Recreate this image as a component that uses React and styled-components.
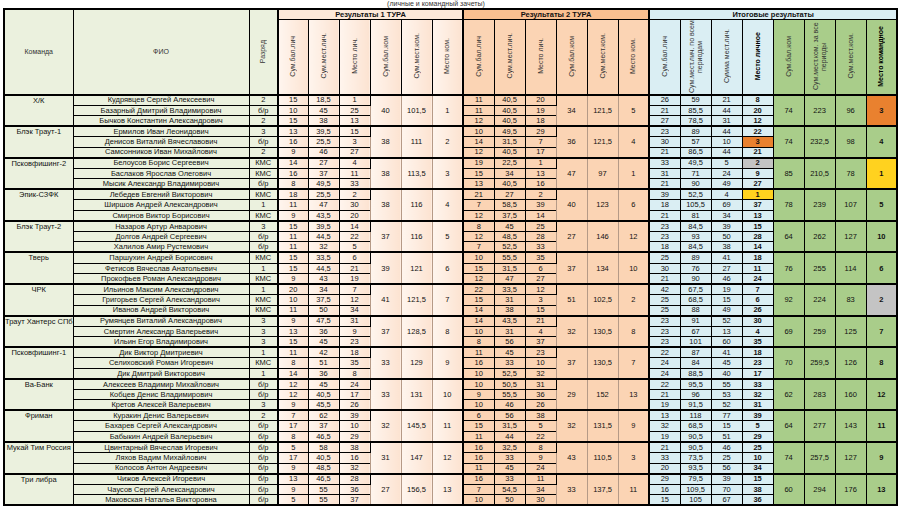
import styled, { createGlobalStyle, css } from "styled-components";

const GlobalStyle = createGlobalStyle`
  body {
    margin: 0;
    background: #fff;
    font-family: "Liberation Sans", Arial, sans-serif;
  }
`;

const tones = {
  base: "#ebf1de",
  r1: "linear-gradient(90deg, #fff5ee 0%, #fce3d1 100%)",
  r1head: "#fde9d9",
  r2: "#fbd4b4",
  r2head: "#fac090",
  blue: "#daeef3",
  lime: "#a9cd8a",
};

const marks = {
  orange: "#e9812f",
  yellow: "#ffd21f",
  gray: "#c4c4c4",
};

const Page = styled.div`
  width: 900px;
  height: 514px;
  overflow: hidden;
`;

const Caption = styled.div`
  height: 8px;
  overflow: hidden;
  display: flex;
  align-items: flex-end;
  justify-content: center;
  padding-right: 28px;
  font-size: 7px;
  line-height: 9px;
  color: #333;
`;

const Table = styled.table`
  width: 894px;
  margin-left: 3px;
  table-layout: fixed;
  border-collapse: collapse;
  border: 2px solid #000;
  color: #111;
  font-size: 7.5px;
`;

const HeadRow = styled.tr`
  height: ${(p) => p.$h}px;
`;

const Row = styled.tr`
  height: 10.54px;
`;

const Cell = styled.td`
  padding: 0;
  line-height: 1;
  text-align: center;
  vertical-align: ${(p) => (p.$top ? "top" : "middle")};
  white-space: nowrap;
  overflow: hidden;
  border: 1px solid ${(p) => (p.$soft ? "#b59a87" : "#000")};
  background: ${(p) => (p.$mark ? marks[p.$mark] : tones[p.$tone || "base"])};
  font-weight: ${(p) => (p.$bold ? 700 : 400)};
  ${(p) =>
    p.$thickLeft &&
    css`
      border-left: 2px solid #000;
    `}
  ${(p) =>
    p.$thickTop &&
    css`
      border-top: 2px solid #000;
    `}
  ${(p) =>
    p.$top &&
    css`
      padding-top: 1px;
    `}
`;

const HeadCell = styled(Cell)`
  color: #333;
  font-size: 7px;
`;

const GroupCell = styled(Cell)`
  font-weight: 700;
  font-size: 7.5px;
  color: #111;
`;

const VText = styled.div`
  display: inline-block;
  writing-mode: vertical-rl;
  transform: rotate(180deg);
  max-height: 73px;
  white-space: normal;
  text-align: center;
  line-height: 8px;
  font-weight: ${(p) => (p.$bold ? 700 : 400)};
  color: ${(p) => (p.$bold ? "#000" : "#333")};
`;

const widths = [69, 176, 29, 30, 31, 31, 31, 31, 31, ...Array(14).fill(31)];

const r1Heads = ["Сум.бал.лич", "Сум.мест.лич.", "Место лич.", "Сум.бал.ком", "Сум.мест.ком.", "Место ком."];
const finHeads = [
  ["Сум.бал.лич", "blue"],
  ["Сум.мест.лич. по всем периодам", "blue"],
  ["Сумма мест.лич.", "blue"],
  ["Место личное", "blue", true],
  ["Сум.бал.ком", "lime"],
  ["Сум.мест.ком. за все периоды", "lime"],
  ["Сум.мест.ком.", "lime"],
  ["Место командное", "lime", true],
];

// team|r1 ком x3|r2 ком x3|итог ком x4|отметка
// name|разряд|r1 x3|r2 x3|итог x4|отметка
const teams = [
  ["Х/К|40|101,5|1|34|121,5|5|74|223|96|3|orange",
    "Кудрявцев Сергей Алексеевич|2|15|18,5|1|11|40,5|20|26|59|21|8",
    "Базарный Дмитрий Владимирович|б/р|10|45|25|11|40,5|19|21|85,5|44|20",
    "Бычков Константин Александрович|2|15|38|13|12|40,5|18|27|78,5|31|12"],
  ["Блэк Траут-1|38|111|2|36|121,5|4|74|232,5|98|4",
    "Ермилов Иван Леонидович|3|13|39,5|15|10|49,5|29|23|89|44|22",
    "Денисов Виталий Вячеславович|б/р|16|25,5|3|14|31,5|7|30|57|10|3|orange",
    "Самсонников Иван Михайлович|2|9|46|27|12|40,5|17|21|86,5|44|21"],
  ["Псковфишинг-2|38|113,5|3|47|97|1|85|210,5|78|1|yellow",
    "Белоусов Борис Сергеевич|КМС|14|27|4|19|22,5|1|33|49,5|5|2|gray",
    "Баслаков Ярослав Олегович|КМС|16|37|11|15|34|13|31|71|24|9",
    "Мысик Александр Владимирович|б/р|8|49,5|33|13|40,5|16|21|90|49|27"],
  ["Эпик-СЗФК|38|116|4|40|123|6|78|239|107|5",
    "Лебедев Евгений Викторович|КМС|18|25,5|2|21|27|2|39|52,5|4|1|yellow",
    "Ширшов Андрей Александрович|1|11|47|30|7|58,5|39|18|105,5|69|37",
    "Смирнов Виктор Борисович|КМС|9|43,5|20|12|37,5|14|21|81|34|13"],
  ["Блэк Траут-2|37|116|5|27|146|12|64|262|127|10",
    "Назаров Артур Анварович|3|15|39,5|14|8|45|25|23|84,5|39|15",
    "Долгов Андрей Сергеевич|б/р|11|44,5|22|12|48,5|28|23|93|50|28",
    "Халилов Амир Рустемович|б/р|11|32|5|7|52,5|33|18|84,5|38|14"],
  ["Тверь|39|121|6|37|134|10|76|255|114|6",
    "Паршухин Андрей Борисович|КМС|15|33,5|6|10|55,5|35|25|89|41|18",
    "Фетисов Вячеслав Анатольевич|1|15|44,5|21|15|31,5|6|30|76|27|11",
    "Прокофьев Роман Александрович|КМС|9|43|19|12|47|27|21|90|46|24"],
  ["ЧРК|41|121,5|7|51|102,5|2|92|224|83|2|gray",
    "Ильинов Максим Александрович|1|20|34|7|22|33,5|12|42|67,5|19|7",
    "Григорьев Сергей Александрович|КМС|10|37,5|12|15|31|3|25|68,5|15|6",
    "Иванов Андрей Викторович|КМС|11|50|34|14|38|15|25|88|49|26"],
  ["Траут Хантерс СПб|37|128,5|8|32|130,5|8|69|259|125|7",
    "Румянцев Виталий Александрович|3|9|47,5|31|14|43,5|21|23|91|52|30",
    "Смертин Александр Валерьевич|3|13|36|9|10|31|4|23|67|13|4",
    "Ильин Егор Владимирович|3|15|45|23|8|56|37|23|101|60|35"],
  ["Псковфишинг-1|33|129|9|37|130,5|7|70|259,5|126|8",
    "Дик Виктор Дмитриевич|1|11|42|18|11|45|23|22|87|41|18",
    "Селиховский Роман Игоревич|КМС|8|51|35|16|33|10|24|84|45|23",
    "Дик Дмитрий Викторович|1|14|36|8|10|52,5|32|24|88,5|40|17"],
  ["Ва-Банк|33|131|10|29|152|13|62|283|160|12",
    "Алексеев Владимир Михайлович|б/р|12|45|24|10|50,5|31|22|95,5|55|33",
    "Кобцев Денис Владимирович|б/р|12|40,5|17|9|55,5|36|21|96|53|32",
    "Кретов Алексей Валерьевич|3|9|45,5|26|10|46|26|19|91,5|52|31"],
  ["Фриман|32|145,5|11|32|131,5|9|64|277|143|11",
    "Куракин Денис Валерьевич|2|7|62|39|6|56|38|13|118|77|39",
    "Бахарев Сергей Александрович|б/р|17|37|10|15|31,5|5|32|68,5|15|5",
    "Бабыкин Андрей Валерьевич|б/р|8|46,5|29|11|44|22|19|90,5|51|29"],
  ["Мукай Тим Россия|31|147|12|43|110,5|3|74|257,5|127|9",
    "Цвинтарный Вячеслав Игоревич|б/р|5|58|38|16|32,5|8|21|90,5|46|25",
    "Ляхов Вадим Михайлович|б/р|17|40,5|16|16|33|9|33|73,5|25|10",
    "Колосов Антон Андреевич|б/р|9|48,5|32|11|45|24|20|93,5|56|34"],
  ["Три либра|27|156,5|13|33|137,5|11|60|294|176|13",
    "Чижов Алексей Игоревич|б/р|13|46,5|28|16|33|11|29|79,5|39|15",
    "Чаусов Сергей Александрович|б/р|9|55|36|7|54,5|34|16|109,5|70|38",
    "Маковская Наталья Викторовна|б/р|5|55|37|10|50|30|15|105|67|36"],
];

function TeamRows({ data }) {
  const [head, ...members] = data;
  const t = head.split("|");
  return members.map((line, i) => {
    const m = line.split("|");
    const first = i === 0;
    return (
      <Row key={i}>
        {first && (
          <Cell rowSpan={3} $top $thickTop>
            {t[0]}
          </Cell>
        )}
        <Cell $thickTop={first}>{m[0]}</Cell>
        <Cell $thickTop={first}>{m[1]}</Cell>
        {m.slice(2, 5).map((v, k) => (
          <Cell key={"a" + k} $tone="r1" $thickTop={first} $thickLeft={k === 0}>
            {v}
          </Cell>
        ))}
        {first &&
          t.slice(1, 4).map((v, k) => (
            <Cell key={"b" + k} rowSpan={3} $tone="r1" $soft $thickTop>
              {v}
            </Cell>
          ))}
        {m.slice(5, 8).map((v, k) => (
          <Cell key={"c" + k} $tone="r2" $thickTop={first} $thickLeft={k === 0}>
            {v}
          </Cell>
        ))}
        {first &&
          t.slice(4, 7).map((v, k) => (
            <Cell key={"d" + k} rowSpan={3} $tone="r2" $soft $thickTop>
              {v}
            </Cell>
          ))}
        {m.slice(8, 12).map((v, k) => (
          <Cell
            key={"e" + k}
            $tone="blue"
            $thickTop={first}
            $thickLeft={k === 0}
            $bold={k === 3}
            $mark={k === 3 ? m[12] : undefined}
          >
            {v}
          </Cell>
        ))}
        {first &&
          t.slice(7, 11).map((v, k) => (
            <Cell
              key={"f" + k}
              rowSpan={3}
              $tone="lime"
              $thickTop
              $bold={k === 3}
              $mark={k === 3 ? t[11] : undefined}
            >
              {v}
            </Cell>
          ))}
      </Row>
    );
  });
}

export default function App() {
  return (
    <Page>
      <GlobalStyle />
      <Caption>(личные и командный зачеты)</Caption>
      <Table>
        <colgroup>
          {widths.map((w, i) => (
            <col key={i} style={{ width: w }} />
          ))}
        </colgroup>
        <thead>
          <HeadRow $h={10}>
            <HeadCell rowSpan={2}>Команда</HeadCell>
            <HeadCell rowSpan={2}>ФИО</HeadCell>
            <HeadCell rowSpan={2}>
              <VText>Разряд</VText>
            </HeadCell>
            <GroupCell colSpan={6} $tone="r1head" $thickLeft>
              Результаты 1 ТУРА
            </GroupCell>
            <GroupCell colSpan={6} $tone="r2head" $thickLeft>
              Результаты 2 ТУРА
            </GroupCell>
            <GroupCell colSpan={8} $tone="blue" $thickLeft>
              Итоговые результаты
            </GroupCell>
          </HeadRow>
          <HeadRow $h={75}>
            {r1Heads.map((h, k) => (
              <HeadCell key={"h1" + k} $tone="r1" $thickLeft={k === 0}>
                <VText>{h}</VText>
              </HeadCell>
            ))}
            {r1Heads.map((h, k) => (
              <HeadCell key={"h2" + k} $tone="r2" $thickLeft={k === 0}>
                <VText>{h}</VText>
              </HeadCell>
            ))}
            {finHeads.map(([h, tone, bold], k) => (
              <HeadCell key={"h3" + k} $tone={tone} $thickLeft={k === 0}>
                <VText $bold={bold}>{h}</VText>
              </HeadCell>
            ))}
          </HeadRow>
        </thead>
        <tbody>
          {teams.map((team, i) => (
            <TeamRows key={i} data={team} />
          ))}
        </tbody>
      </Table>
    </Page>
  );
}
